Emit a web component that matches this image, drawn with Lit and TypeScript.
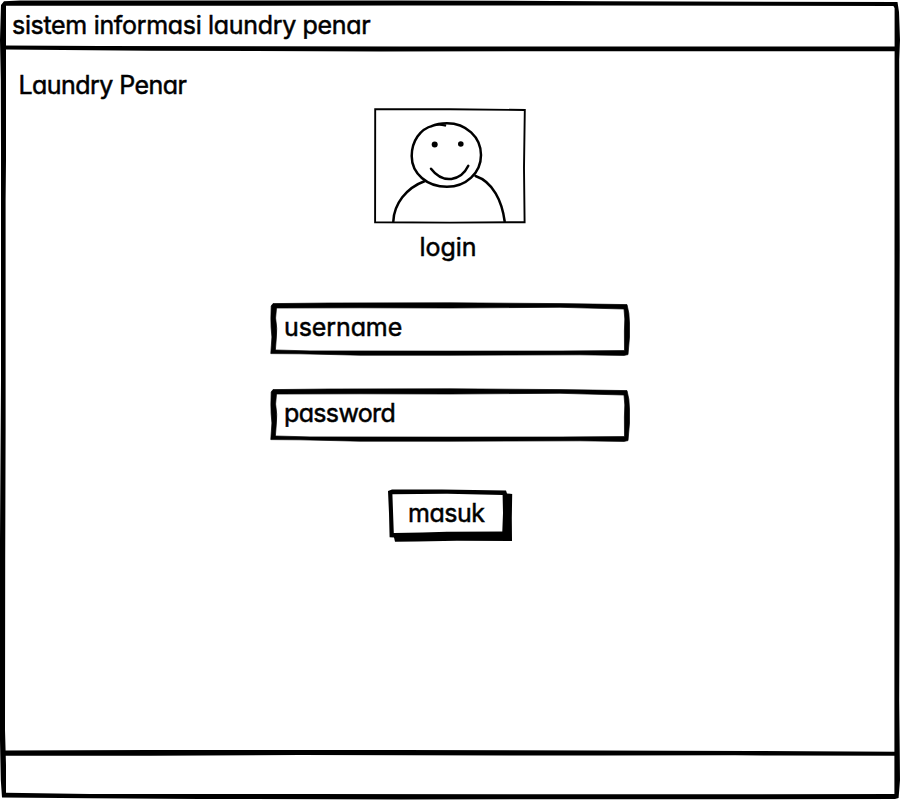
import { LitElement, html, css, svg } from "lit";
import { customElement, property } from "lit/decorators.js";

const sketchText = css`
  :host {
    font-family: Inter, "Noto Sans", sans-serif;
    font-size: 25px;
    line-height: 30px;
    font-feature-settings: "cv11" 1, "ss03" 1;
    -webkit-text-stroke: 0.5px #000;
    color: #000;
  }
`;

@customElement("sketch-field")
export class SketchField extends LitElement {
  @property() label = "";
  static styles = [
    sketchText,
    css`
      :host { display: block; position: relative; width: 360px; height: 54px; }
      svg { position: absolute; inset: 0; overflow: visible; }
      path { stroke: #000; stroke-width: 0.7; stroke-linejoin: round; }
      .label { position: relative; display: block; padding: 11px 0 0 14px; }
      .username { letter-spacing: -0.1px; }
      .password { letter-spacing: -0.65px; }
    `,
  ];
  render() {
    return html`
      <svg width="360" height="54" viewBox="0 0 360 54">
        <path fill-rule="evenodd" d="M3 2.6 L60 2 L180 1.8 L290 2.6 L357 3.6 Q359.5 12 359.5 22 L359.5 36 L358 53.6 L354 54.4 L310 53.8 L180 54.2 L90 54.2 L30 52.8 L.8 52.6 Q1.4 44 1.9 36 Q.8 26 .9 17 L1.2 5 Z
          M6.5 7 L5.6 17 Q7.4 28 6.4 36 L5.4 49 L40 49.9 L180 50.1 L290 50 L354.5 49.6 L354.4 30 L354.8 18 L354 8 L290 6.3 L180 7 L90 6.8 Z" />
      </svg>
      <span class="label ${this.label}">${this.label}</span>
    `;
  }
}

@customElement("app-root")
export class AppRoot extends LitElement {
  static styles = [
    sketchText,
    css`
      :host { display: block; position: relative; width: 900px; height: 800px; background: #fff; overflow: hidden; }
      svg { display: block; overflow: visible; }
      .frame { position: absolute; inset: 0; }
      .window { position: relative; display: flex; flex-direction: column; height: 800px; }
      .titlebar { box-sizing: border-box; height: 49px; padding: 10px 0 0 12px; letter-spacing: -0.32px; white-space: nowrap; }
      .brand { box-sizing: border-box; height: 59px; padding: 21px 0 0 18.5px; letter-spacing: -0.55px; white-space: nowrap; }
      .form { display: flex; flex-direction: column; align-items: center; }
      .caption { margin: 7px 4px 0 0; height: 30px; }
      .fields { display: flex; flex-direction: column; gap: 32px; margin-top: 39px; }
      .submit { position: relative; display: block; width: 126px; height: 54px; margin-top: 47px; padding: 0; border: 0; background: none; font: inherit; font-feature-settings: inherit; letter-spacing: -0.5px; color: inherit; -webkit-text-stroke: inherit; text-align: left; }
      .submit svg { position: absolute; inset: 0; }
      .submit span { position: absolute; left: 21px; top: 10px; }
    `,
  ];

  private frame() {
    return svg`<svg class="frame" width="900" height="800" viewBox="0 0 900 800">
      <path fill-rule="evenodd" d="M4 1.3 L20 .4 L400 .4 L600 1.2 L897.5 2 L899 12 L900 40 L899.2 60 L899.7 250 L899.2 400 L899.7 550 L899.2 700 L900 780 L898.6 798 L895 799 L600 799.3 L400 799.4 L200 799 L90 798.2 L2 797.6 L.8 780 L0 740 L0 540 L1 380 L1 150 L.8 80 L0 40 L1 5 Z
        M6 5.8 L6 160 L5.6 200 L5.6 430 L5.2 560 L5 730 L6 765 L6 792.8 L90 794 L300 794 L600 794.3 L894.4 794.1 L894.4 740 L894.4 400 L894.6 150 L894.6 8 L893.4 6 L600 5.6 L400 5.6 Z" />
      <path d="M5 45.6 L100 46 L400 46.4 L650 46.6 L896 46.4 L896 51.2 L600 51.3 L380 51.4 L150 50.7 L5 49.6 Z" />
      <path d="M5 750.4 L150 750.1 L400 750 L600 750.5 L750 751 L896 751.8 L896 755.8 L780 755.6 L735 755.2 L600 755.5 L300 755.1 L150 755.7 L5 755.8 Z" />
    </svg>`;
  }

  private portrait() {
    return svg`<svg width="152" height="117" viewBox="0 0 152 117" fill="none" stroke="#000" stroke-linecap="round">
      <path stroke-width="1.9" d="M1.2 1.3 L76 1.2 L150.8 2 L150 60 L150.6 114.2 L76 114.6 L1.1 114.2 Z" />
      <g stroke-width="2.5">
        <path d="M71 17.4 C67 16.2 62 16.6 59 17.6 C46 21 37.7 33 37.7 48 C37.7 65.5 53 78.8 73 78.8 C92 78.8 107 65 107 47 C107 29 92 15.2 73 15.2 C66 15.2 61 16.6 57 18.4" />
        <path d="M51 73 C32 80 20 96 19.3 113.5" />
        <path d="M101.5 68 C119 74 128 93 130.7 113.5" />
        <path d="M57 60.8 C69 76.5 87 73 94.3 57.8" />
      </g>
      <circle cx="60.7" cy="36.4" r="3" fill="#000" stroke="none" />
      <circle cx="86.8" cy="36" r="2.8" fill="#000" stroke="none" />
    </svg>`;
  }

  render() {
    return html`
      ${this.frame()}
      <div class="window">
        <div class="titlebar">sistem informasi laundry penar</div>
        <div class="brand">Laundry Penar</div>
        <div class="form">
          ${this.portrait()}
          <div class="caption">login</div>
          <div class="fields">
            <sketch-field label="username"></sketch-field>
            <sketch-field label="password"></sketch-field>
          </div>
          <button class="submit">
            <svg width="126" height="54" viewBox="0 0 126 54">
              <path d="M1 3 L5 1.4 L55 1.6 L119 2.4 L120 5.4 L125.2 6 L124.8 30 L125 53 L70 52.8 L30 53.6 L8 53.8 L7 49.6 L2.6 49.2 L2 25 Z" />
              <path fill="#fff" d="M5.4 6.2 L60 5.8 L115.6 7 L116 25 L115.3 43.6 L60 43.8 L35 44.6 L6.8 45 Z" />
            </svg>
            <span>masuk</span>
          </button>
        </div>
      </div>
    `;
  }
}
